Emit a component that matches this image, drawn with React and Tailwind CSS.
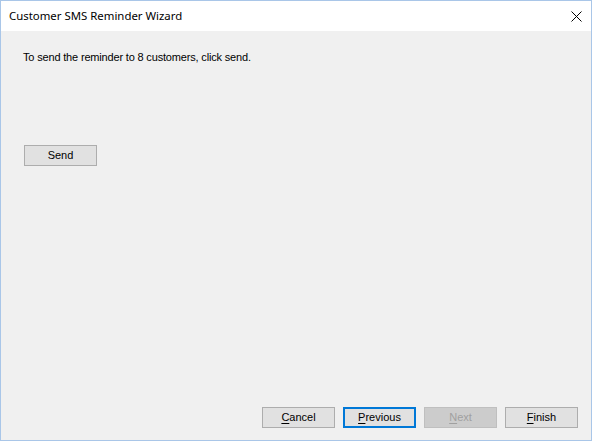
import React from 'react';

const font = { fontFamily: '"Liberation Sans", Arial, sans-serif' };

function Btn({ children, u, rest, primary, disabled }) {
  return (
    <button
      className={
        'w-[73px] h-[21px] flex items-center justify-center text-[11px] leading-none ' +
        (primary
          ? 'border-2 border-[#0078d7] bg-[#e1e1e1] text-black'
          : disabled
          ? 'border border-[#bfbfbf] bg-[#cccccc] text-[#a0a0a0]'
          : 'border border-[#adadad] bg-[#e1e1e1] text-black')
      }
    >
      <span className="underline underline-offset-2">{u}</span>
      <span>{rest}</span>
    </button>
  );
}

export default function App() {
  return (
    <div className="w-[592px] h-[441px] border border-[#a9c6e8] flex flex-col bg-[#f0f0f0]" style={font}>
      <div className="h-[30px] bg-white flex items-center justify-between pl-[8px] pr-[9px] shrink-0">
        <span className="text-[11.4px] text-black" style={{ fontFamily: '"Noto Sans", "Open Sans", sans-serif' }}>
          Customer SMS Reminder Wizard
        </span>
        <svg width="11" height="11" viewBox="0 0 11 11">
          <path d="M0.5 0.5 L10.5 10.5 M10.5 0.5 L0.5 10.5" stroke="#000" strokeWidth="1" />
        </svg>
      </div>
      <div className="flex-1 flex flex-col pl-[22px] pr-[13px]">
        <p className="mt-[20px] text-[11px] tracking-[-0.17px] text-black leading-[13px]">
          To send the reminder to 8 customers, click send.
        </p>
        <div className="mt-[81px] ml-[1px]">
          <Btn rest="Send" />
        </div>
        <div className="flex-1" />
        <div className="flex justify-end gap-[8px] mb-[12px]">
          <Btn u="C" rest="ancel" />
          <Btn u="P" rest="revious" primary />
          <Btn u="N" rest="ext" disabled />
          <Btn u="F" rest="inish" />
        </div>
      </div>
    </div>
  );
}
